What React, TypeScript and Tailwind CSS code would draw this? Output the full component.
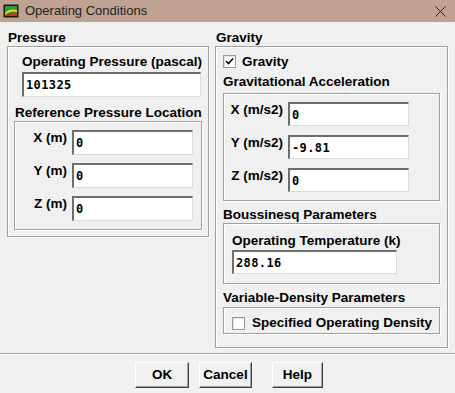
import type { ReactNode } from 'react';

const ui = { fontFamily: '"Liberation Sans", Arial, sans-serif' };
const mono = { fontFamily: '"DejaVu Sans Mono", "Liberation Mono", monospace' };

function Group({ className = '', children }: { className?: string; children: ReactNode }) {
  return (
    <div className={`border border-[#a0a0a0] shadow-[inset_1px_1px_0_#fff,1px_1px_0_#fff] ${className}`}>
      {children}
    </div>
  );
}

function Label({ className = '', children }: { className?: string; children: ReactNode }) {
  return <div className={`text-[13.5px] font-bold leading-[16px] text-black whitespace-nowrap ${className}`}>{children}</div>;
}

function Field({ value, className = '' }: { value: string; className?: string }) {
  return (
    <div
      className={`bg-white border-t-2 border-l-2 border-t-[#6e6e6e] border-l-[#6e6e6e] border-r border-b border-r-[#dcdcdc] border-b-[#dcdcdc] pl-[2px] flex items-center text-[12px] font-bold tracking-[0.4px] text-black ${className}`}
      style={mono}
    >
      {value}
    </div>
  );
}

function Check({ checked }: { checked?: boolean }) {
  return (
    <div className="w-[13px] h-[13px] bg-white border border-[#9a9a9a] shadow-[inset_1px_1px_0_#e0e0e0] shrink-0 flex items-center justify-center">
      {checked && (
        <svg width="9" height="9" viewBox="0 0 9 9">
          <path d="M1 4 L3.5 6.5 L8 1.5" stroke="#000" strokeWidth="1.6" fill="none" />
        </svg>
      )}
    </div>
  );
}

function Row({ label, value, labelW, fieldW, h, className = '' }: { label: string; value: string; labelW: string; fieldW: string; h: string; className?: string }) {
  return (
    <div className={`flex items-start ${className}`}>
      <Label className={`${labelW} text-right pr-[5px]`}>{label}</Label>
      <Field value={value} className={`${fieldW} ${h}`} />
    </div>
  );
}

function Button({ children, className = '' }: { children: ReactNode; className?: string }) {
  return (
    <div
      className={`h-[26px] bg-[#f0f0f0] border border-t-white border-l-white border-r-[#404040] border-b-[#404040] shadow-[inset_-1px_-1px_0_#a0a0a0] flex items-center justify-center text-[13.5px] font-bold text-black ${className}`}
    >
      {children}
    </div>
  );
}

export default function App() {
  return (
    <div className="w-[455px] h-[393px] bg-[#f0f0f0] overflow-hidden" style={ui}>
      {/* title bar */}
      <div className="h-[22px] bg-[#c0a292] flex items-center pl-[3px] pr-[9px]">
        <svg width="16" height="14" viewBox="0 0 16 14" className="shrink-0">
          <rect x="0.5" y="0.5" width="15" height="13" fill="#1a1a1a" />
          <rect x="2" y="2" width="12" height="10" fill="#2f9a3a" />
          <path d="M2 9 Q6 4 14 6 L14 8 Q7 6 2 11 Z" fill="#e8d830" />
          <path d="M2 12 Q6 8 14 9 L14 12 Z" fill="#c43a20" />
        </svg>
        <span className="ml-[6px] text-[13px] text-[#222]">Operating Conditions</span>
        <svg width="11" height="11" viewBox="0 0 11 11" className="ml-auto">
          <path d="M0.5 0.5 L10.5 10.5 M10.5 0.5 L0.5 10.5" stroke="#222" strokeWidth="1" />
        </svg>
      </div>

      <div className="flex items-start pl-[7px] pt-[8px]">
        {/* left column */}
        <div className="w-[202px]">
          <Label className="pl-[1px]">Pressure</Label>
          <Group className="pt-[7px] pb-[6px] px-[6px]">
            <div className="pl-[8px]">
              <Label>Operating Pressure (pascal)</Label>
              <Field value="101325" className="mt-[2px] w-[179px] h-[25px]" />
            </div>
            <Label className="mt-[8px] pl-[1px]">Reference Pressure Location</Label>
            <Group className="pt-[8px] pb-[8px] flex flex-col gap-[8px]">
              <Row label="X (m)" value="0" labelW="w-[57px]" fieldW="w-[121px]" h="h-[25px]" />
              <Row label="Y (m)" value="0" labelW="w-[57px]" fieldW="w-[121px]" h="h-[25px]" />
              <Row label="Z (m)" value="0" labelW="w-[57px]" fieldW="w-[121px]" h="h-[25px]" />
            </Group>
          </Group>
        </div>

        {/* right column */}
        <div className="w-[233px] ml-[6px]">
          <Label className="pl-[1px]">Gravity</Label>
          <Group className="pt-[8px] pb-[13px] px-[7px]">
            <div className="flex items-center h-[13px]">
              <Check checked />
              <Label className="ml-[6px]">Gravity</Label>
            </div>
            <Label className="mt-[6px]">Gravitational Acceleration</Label>
            <Group className="mt-[3px] pt-[8px] pb-[8px] flex flex-col gap-[9px]">
              <Row label="X (m/s2)" value="0" labelW="w-[64px]" fieldW="w-[121px]" h="h-[24px]" />
              <Row label="Y (m/s2)" value="-9.81" labelW="w-[64px]" fieldW="w-[121px]" h="h-[24px]" />
              <Row label="Z (m/s2)" value="0" labelW="w-[64px]" fieldW="w-[121px]" h="h-[24px]" />
            </Group>
            <Label className="mt-[6px]">Boussinesq Parameters</Label>
            <Group className="pt-[9px] pb-[9px] px-[8px]">
              <Label>Operating Temperature (k)</Label>
              <Field value="288.16" className="mt-[1px] w-[165px] h-[24px]" />
            </Group>
            <Label className="mt-[6px]">Variable-Density Parameters</Label>
            <Group className="mt-[1px] pt-[7px] pb-[2px] px-[8px]">
              <div className="flex items-center h-[16px]">
                <Check />
                <Label className="ml-[7px]">Specified Operating Density</Label>
              </div>
            </Group>
          </Group>
        </div>
      </div>

      {/* separator */}
      <div className="mt-[5px] border-t border-t-[#a0a0a0] border-b border-b-white" />

      {/* buttons */}
      <div className="flex mt-[7px] pl-[135px]">
        <Button className="w-[54px]">OK</Button>
        <Button className="w-[53px] ml-[10px]">Cancel</Button>
        <Button className="w-[51px] ml-[20px]">Help</Button>
      </div>
    </div>
  );
}
